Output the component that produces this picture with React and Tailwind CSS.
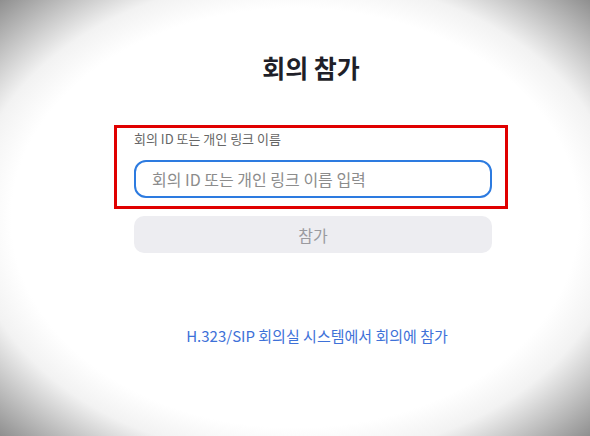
export default function App() {
    return (
        <div
            className="h-[436px] w-full flex justify-center pl-[32px] bg-[radial-gradient(ellipse_at_center,#ffffff_68%,#f2f2f2_78%,#8f8f8f_100%)]"
            style={{ fontFamily: '"Noto Sans CJK KR", "Noto Sans", sans-serif' }}
        >
            <div className="w-[394px] flex flex-col pt-[52px]">
                <h1 className="text-center text-[25px] leading-[30px] font-bold text-[#1f1f29]">
                    회의 참가
                </h1>

                <div className="mt-[43px] border-[3px] border-[#e00000] pl-[17px] pr-[13px] pt-[3px] pb-[8px]">
                    <div className="text-[13px] leading-[16px] text-[#666]">
                        회의 ID 또는 개인 링크 이름
                    </div>
                    <input
                        className="mt-[13px] w-[358px] h-[38px] rounded-[12px] border-2 border-[#2d7be0] px-[16px] text-[16px] text-[#333] placeholder:text-[#8c8c8c] outline-none"
                        placeholder="회의 ID 또는 개인 링크 이름 입력"
                    />
                </div>

                <button className="mt-[7px] ml-[20px] w-[358px] h-[37px] rounded-[10px] bg-[#ededf1] text-[16px] text-[#9a9a9f]">
                    참가
                </button>

                <a className="mt-[73px] pl-[12px] text-center text-[15px] leading-[20px] text-[#3e71d8]">
                    H.323/SIP 회의실 시스템에서 회의에 참가
                </a>
            </div>
        </div>
    );
}
